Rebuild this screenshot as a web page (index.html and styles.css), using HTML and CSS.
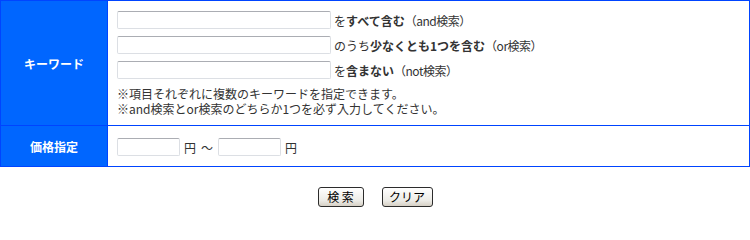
FILE: index.html
```html
<!DOCTYPE html>
<html lang="ja">
<head>
<meta charset="utf-8">
<title>検索</title>
<link rel="stylesheet" href="styles.css">
</head>
<body>
<form class="search-form">
  <table class="search-table">
    <tr class="row-keyword">
      <th class="label">キーワード</th>
      <td class="field">
        <div class="kw-row"><input type="text" class="kw-input"><span class="kw-text">を<b>すべて含む</b><span class="note-paren">（and検索）</span></span></div>
        <div class="kw-row"><input type="text" class="kw-input"><span class="kw-text">のうち<b>少なくとも1つを含む</b><span class="note-paren">（or検索）</span></span></div>
        <div class="kw-row"><input type="text" class="kw-input"><span class="kw-text">を<b>含まない</b><span class="note-paren">（not検索）</span></span></div>
        <div class="notes">
          <p class="note-line">※項目それぞれに複数のキーワードを指定できます。</p>
          <p class="note-line">※and検索とor検索のどちらか1つを必ず入力してください。</p>
        </div>
      </td>
    </tr>
    <tr class="row-price">
      <th class="label">価格指定</th>
      <td class="field price-field">
        <div class="price-row"><input type="text" class="price-input"><span>円</span><span class="tilde">～</span><input type="text" class="price-input"><span>円</span></div>
      </td>
    </tr>
  </table>
  <div class="actions">
    <button type="button" class="btn btn-search">検 索</button>
    <button type="button" class="btn btn-clear">クリア</button>
  </div>
</form>
</body>
</html>
```

FILE: styles.css
```css
html, body {
  margin: 0;
  padding: 0;
  background: #ffffff;
}
body {
  font-family: "Noto Sans CJK JP", "Liberation Sans", sans-serif;
  font-size: 12px;
  color: #333333;
}
.search-form {
  margin: 0;
  width: 750px;
}
.search-table {
  width: 750px;
  border-collapse: collapse;
  border: 1px solid #0044ff;
}
.search-table th,
.search-table td {
  border: 1px solid #0044ff;
}
.label {
  width: 106px;
  padding: 0;
  background: #0066ff;
  color: #ffffff;
  font-weight: bold;
  font-size: 12px;
  text-align: center;
  vertical-align: middle;
}
.field {
  padding: 10px 9px 9px 9px;
  vertical-align: top;
  text-align: left;
}
.kw-row {
  display: flex;
  align-items: center;
  gap: 3px;
  height: 18px;
  margin-bottom: 7px;
}
.kw-row b {
  font-weight: bold;
}
.note-paren {
  letter-spacing: -0.5px;
}
input[type="text"] {
  box-sizing: border-box;
  height: 18px;
  margin: 0;
  padding: 0 2px;
  border: 1px solid #dcdfe4;
  border-top-color: #abadb3;
  border-radius: 2px;
  background: #ffffff;
}
.kw-input {
  width: 214px;
}
.notes {
  margin: 4px 0 0 0;
}
.note-line {
  margin: 0;
  height: 15px;
  line-height: 15px;
}
.price-field {
  padding: 12px 9px 10px 9px;
}
.price-row {
  display: flex;
  align-items: center;
  gap: 4px;
  height: 18px;
}
.price-input {
  width: 63px;
}
.tilde {
  margin: 0 1px;
}
.actions {
  display: flex;
  justify-content: center;
  gap: 18px;
  margin-top: 20px;
}
.btn {
  box-sizing: border-box;
  height: 20px;
  padding: 0;
  font-family: "Noto Sans CJK JP", "Liberation Sans", sans-serif;
  font-size: 12px;
  line-height: 18px;
  color: #000000;
  background: linear-gradient(#ffffff, #ecebe6 70%, #d6d0c5);
  border: 1px solid #2c2c2c;
  border-radius: 3px;
}
.btn-search {
  width: 46px;
}
.btn-clear {
  width: 51px;
}
```
